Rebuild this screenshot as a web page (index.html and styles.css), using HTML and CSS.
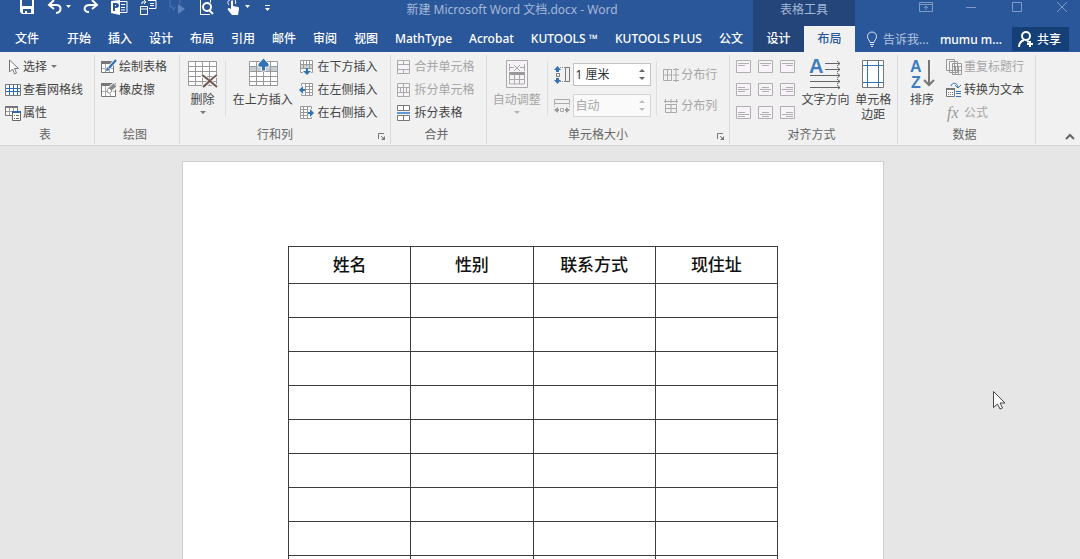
FILE: index.html
```html
<!DOCTYPE html>
<html lang="zh-CN">
<head>
    <meta charset="UTF-8">
    <title>新建 Microsoft Word 文档.docx - Word</title>
    <link rel="stylesheet" href="styles.css">
</head>
<body>
    <header class="header">
        <div class="title-bar">
            <div class="quick-access">
                <button aria-label="保存"><svg width="16" height="16" viewBox="0 0 16 16"><path fill="#fff" fill-rule="evenodd" d="M1 0h14v14H3l-2-2zM3 0v6h10V0zM4 9v4h2v-2h2v2h4V9z"/></svg></button>
                <span class="split">
                    <button aria-label="撤销"><svg width="16" height="16" viewBox="0 0 16 16" fill="none" stroke="#fff" stroke-width="2"><path d="M7 0L2 5l5 4M2 5h7c6 0 6 7 0 8"/></svg></button>
                    <button aria-label="撤销列表"><svg width="5" height="16" viewBox="0 0 5 16"><path fill="#fff" d="M0 5h5L2.500 8z"/></svg></button>
                </span>
                <button aria-label="恢复"><svg width="16" height="16" viewBox="0 0 16 16" fill="none" stroke="#fff" stroke-width="2"><path d="M9 0l5 5-5 4M14 5H7C0 5 0 12 6 12"/></svg></button>
                <button aria-label="发布"><svg width="17" height="16" viewBox="0 0 17 16"><path fill="#fff" fill-rule="evenodd" d="M0 1l9-1v15l-9-2zM2 3v8h2V8h1c4 0 4-5 0-5zM4 5h1v1H4z"/><path fill="none" stroke="#fff" d="M9 1.500h7v11H9M10 4.500h4M10 7.500h4M10 10h4"/></svg></button>
                <button aria-label="合并文档"><svg width="17" height="16" viewBox="0 0 17 16" fill="none" stroke="#fff"><path d="M.5 6.500h7v8h-7zM1 9h6M8 .5h8v8H9M10 3.500h4M10 5.500h4M2 4V2h4M4 0l2 2-2 2"/></svg></button>
                <button aria-label="下一条批注" disabled><svg width="17" height="16" viewBox="0 0 17 16"><path fill="none" stroke="#4f77b3" d="M1 0v7h3v3l3-3M11 0v4"/><path fill="#5f84bb" d="M9 4l7 5-7 5z"/></svg></button>
                <button aria-label="打印预览"><svg width="16" height="16" viewBox="0 0 16 16" fill="none" stroke="#fff"><path d="M12.500 2.500V0M12 14.500H2.500V0"/><circle cx="9" cy="7" r="4" stroke-width="2"/><path stroke-width="2" d="M11 10l4 4"/></svg></button>
                <span class="split">
                    <button aria-label="触摸模式"><svg width="16" height="16" viewBox="0 0 16 16"><path fill="#fff" d="M5 1c1-1 2-1 2 0v5l5 1c1 0 1 1 1 2l-1 6H6L2 10c-1-1 0-2 1-2l2 1z"/><path fill="none" stroke="#fff" d="M3 5C1 3 2 0 4 0M9 4c1-1 1-3 0-4"/></svg></button>
                    <button aria-label="触摸模式列表"><svg width="5" height="16" viewBox="0 0 5 16"><path fill="#fff" d="M0 5h5L2.500 8z"/></svg></button>
                </span>
                <button class="customize" aria-label="自定义"><svg width="7" height="16" viewBox="0 0 7 16"><path fill="#fff" d="M1 5h5v1H1zM1 8h5l-2.500 3z"/></svg></button>
            </div>
            <div class="doc-title">新建 Microsoft Word 文档.docx - Word</div>
        </div>
        <div class="context-title">表格工具</div>
        <div class="window-controls">
            <button aria-label="功能区显示选项"><svg width="14" height="14" viewBox="0 0 14 14"><path d="M.5 2.500h13v9H.5zM1 4.500h12M7 10V6M5 8l2-2 2 2"/></svg></button>
            <button aria-label="最小化"><svg width="14" height="14" viewBox="0 0 14 14"><path d="M2 7.500h10"/></svg></button>
            <button aria-label="最大化"><svg width="14" height="14" viewBox="0 0 14 14"><path d="M2.500 2.500h9v9h-9z"/></svg></button>
            <button aria-label="关闭"><svg width="14" height="14" viewBox="0 0 14 14"><path d="M2 2l10 10M12 2L2 12"/></svg></button>
        </div>
        <nav class="tabs">
            <button>文件</button>
            <div class="tab-list">
                <button>开始</button>
                <button>插入</button>
                <button>设计</button>
                <button>布局</button>
                <button>引用</button>
                <button>邮件</button>
                <button>审阅</button>
                <button>视图</button>
                <button>MathType</button>
                <button>Acrobat</button>
                <button>KUTOOLS ™</button>
                <button>KUTOOLS PLUS</button>
                <button>公文</button>
            </div>
        </nav>
        <nav class="context-tabs">
            <button>设计</button>
            <button class="active">布局</button>
        </nav>
        <div class="account">
            <label class="tell-me">
                <svg width="12" height="16" viewBox="0 0 12 16" fill="none" stroke="#e0e8f4"><path d="M4 11.500c0-2-2.500-3-2.500-6a4.500 4.500 0 0 1 9 0c0 3-2.500 4-2.500 6zM4 13.500h4M5 15.500h2"/></svg>
                <input type="text" placeholder="告诉我..." aria-label="告诉我">
            </label>
            <button class="user">mumu m...</button>
            <button class="share"><svg width="16" height="18" viewBox="0 0 16 18" fill="none" stroke="#fff" stroke-width="2"><circle cx="8" cy="6" r="4"/><path d="M1 17c0-4 2-6 5-7M9 11l2 1M12 11v6M9 14h6"/></svg>共享</button>
        </div>
    </header>

    <main>
        <section class="ribbon">
            <div class="group">
                <div class="group-body">
                    <div class="stack">
                        <button class="small"><svg width="16" height="16" viewBox="0 0 16 16"><path fill="#fff" stroke="#777" d="M4.500 1v12l3-3 2 5 2-1-2-4.500h4z"/></svg>选择<i class="caret"></i></button>
                        <button class="small"><svg width="16" height="16" viewBox="0 0 16 16"><path fill="#fff" stroke="#777" d="M.5 2.500h15v11H.5z"/><path fill="none" stroke="#2f6db5" d="M4.500 3v10M8.500 3v10M12.500 3v10M1 6.500h14M1 9.500h14"/></svg>查看网格线</button>
                        <button class="small"><svg width="16" height="16" viewBox="0 0 16 16"><path fill="#fff" stroke="#777" d="M.5 1.500h12v9H.5z"/><path fill="#777" d="M0 1h13v2H0z"/><path stroke="#999" d="M4.500 3v7M8.500 3v7M1 6.500h11"/><path fill="#fff" stroke="#666" d="M7.500 6.500h8v9h-8z"/><path fill="#2f6db5" d="M7 6h9v2H7z"/><path stroke="#666" d="M9 10.500h1M11 10.500h3M9 13.500h1M11 13.500h3"/></svg>属性</button>
                    </div>
                </div>
                <div class="group-label">表</div>
            </div>

            <div class="group">
                <div class="group-body">
                    <div class="stack">
                        <button class="small"><svg width="16" height="16" viewBox="0 0 16 16"><path fill="#fff" stroke="#777" d="M.5 2.500h12v11H.5z"/><path fill="#777" d="M0 2h13v3H0z"/><path stroke="#aaa" d="M4.500 5v8M8.500 5v8M1 9.500h11"/><path fill="none" stroke="#f1f1f1" stroke-width="4" d="M6 11l9-10"/><path fill="none" stroke="#2f6db5" stroke-width="2" d="M8 9l7-8"/><path fill="#2f6db5" d="M5 12l1-4 3 3z"/></svg>绘制表格</button>
                        <button class="small"><svg width="16" height="16" viewBox="0 0 16 16"><path fill="#fff" stroke="#777" d="M.5 1.500h14v13H.5z"/><path fill="#777" d="M0 1h13v3H0z"/><path stroke="#aaa" d="M4.500 4v10M9.500 4v10M1 9.500h13"/><path stroke="#f1f1f1" stroke-width="7" d="M7 9l8-6"/><path stroke="#888" stroke-width="4" d="M8 8l6-5"/><path fill="#fff" stroke="#999" d="M6 8l2-2 3 3-2 2H7z"/></svg>橡皮擦</button>
                    </div>
                </div>
                <div class="group-label">绘图</div>
            </div>

            <div class="group">
                <div class="group-body">
                    <button class="large"><svg width="32" height="30" viewBox="0 0 32 30"><path fill="#fff" stroke="#999" d="M1.500 2.500h28v24h-28z"/><path stroke="#999" d="M8.500 2v24M15.500 2v24M22.500 2v24M1 7.500h28M1 12.500h28M1 17.500h28M1 22.500h28"/><path stroke="#f1f1f1" stroke-width="4" d="M15 16l15 12M30 16L16 28"/><path fill="none" stroke="#6b5650" stroke-width="2" d="M15 16c5 3 10 8 15 12M30 16c-5 3-9 8-14 12"/></svg>删除<i class="caret"></i></button>
                    <div class="divider"></div>
                    <button class="large"><svg width="32" height="30" viewBox="0 0 32 30"><path fill="#fff" stroke="#999" d="M2.500 2.500h28v24h-28z"/><path fill="#c5ccd6" d="M3 8h27v5H3z"/><path stroke="#999" d="M9.500 2v24M16.500 13v13M23.500 2v24M2 7.500h28M2 12.500h28M2 17.500h28M2 22.500h28"/><path fill="#2f75b5" stroke="#f1f1f1" d="M16.500-1L22 5v3h-3.500v4h-4V8H11V5z"/></svg>在上方插入</button>
                    <div class="stack">
                        <button class="small"><svg width="16" height="16" viewBox="0 0 16 16"><path fill="#fff" stroke="#999" d="M1.500 1.500h12v12h-12z"/><path fill="#ccd2da" d="M2 6h11v3H2z"/><path stroke="#999" d="M4.500 1v12M7.500 1v6M10.500 1v12M1 5.500h12M1 9.500h12"/><path fill="#f1f1f1" d="M4 10h8v6H4z"/><path fill="#2f75b5" d="M7 9h2v3h3l-4 4-4-4h3z"/></svg>在下方插入</button>
                        <button class="small"><svg width="16" height="16" viewBox="0 0 16 16"><path fill="#fff" stroke="#999" d="M2.500 1.500h11v12h-11z"/><path stroke="#999" d="M6.500 1v12M10.500 1v12M2 4.500h11M2 7.500h11M2 10.500h11"/><path fill="#f1f1f1" d="M0 4h6v8H0z"/><path fill="#2f75b5" d="M0 8l4-4v3h2v2H4v3z"/></svg>在左侧插入</button>
                        <button class="small"><svg width="16" height="16" viewBox="0 0 16 16"><path fill="#fff" stroke="#999" d="M1.500 1.500h11v12h-11z"/><path stroke="#999" d="M4.500 1v12M8.500 1v12M1 4.500h11M1 7.500h11M1 10.500h11"/><path fill="#f1f1f1" d="M9 4h6v8H9z"/><path fill="#2f75b5" d="M15 8l-4-4v3H9v2h2v3z"/></svg>在右侧插入</button>
                    </div>
                </div>
                <div class="group-label wide">行和列</div>
                <button class="launcher" aria-label="插入单元格"><svg width="8" height="8" viewBox="0 0 8 8"><path fill="none" stroke="#777" d="M.5 6V.5H6M3 3l3 3"/><path fill="#777" d="M7 3v4H3z"/></svg></button>
            </div>

            <div class="group">
                <div class="group-body">
                    <div class="stack">
                        <button class="small" disabled><svg width="16" height="16" viewBox="0 0 16 16" fill="#f7f2f7" stroke="#aaa"><path d="M1.500 1.500h12v13h-12zM1 5.500h12M1 10.500h12M7.500 1v4M7.500 11v4"/></svg>合并单元格</button>
                        <button class="small" disabled><svg width="16" height="16" viewBox="0 0 16 16" fill="#f7f2f7" stroke="#aaa"><path d="M1.500 1.500h12v13h-12zM1 5.500h12M1 10.500h12M7.500 1v14M4.500 6v4M10.500 6v4"/></svg>拆分单元格</button>
                        <button class="small"><svg width="16" height="16" viewBox="0 0 16 16"><path fill="#fff" stroke="#777" d="M1.500.5h12v5h-12zM1.500 10.500h12v5h-12zM7.500 1v4M7.500 11v4"/><path stroke="#5b9bd5" stroke-width="2" d="M1 8h13"/></svg>拆分表格</button>
                    </div>
                </div>
                <div class="group-label">合并</div>
            </div>

            <div class="group">
                <div class="group-body">
                    <button class="large" disabled><svg width="24" height="30" viewBox="0 0 24 30"><path fill="#f7f2f7" stroke="#aaa" d="M1.500 1.500h21v27h-21z"/><path fill="#999" d="M4 13h16v3H4z"/><path fill="none" stroke="#aaa" d="M4.500 14v11h15V14M4 20.500h16M9.500 16v9M14.500 16v9M4.500 5v7M19.500 5v7M5 8.500h4M15 8.500h4M9 6l6 6M15 6l-6 6"/></svg>自动调整<i class="caret"></i></button>
                    <div class="divider"></div>
                    <div class="sizes">
                        <div class="size-row">
                            <svg width="16" height="18" viewBox="0 0 16 18"><path fill="#2f75b5" d="M3.500 0L7 4H5v2H2V4H0zM3.500 18L7 14H5v-2H2v2H0z"/><path fill="none" stroke="#777" d="M2.500 7.500h3v3h-3zM11.500 1.500h4v14h-4z"/><path stroke="#888" stroke-dasharray="1 1" d="M6 1.500h5M6 15.500h5"/></svg>
                            <div class="spin">
                                <input type="text" value="1 厘米" aria-label="高度">
                                <div class="arrows"><button aria-label="增加高度" class="up"></button><button aria-label="减少高度" class="down"></button></div>
                            </div>
                        </div>
                        <div class="size-row">
                            <svg width="16" height="18" viewBox="0 0 16 18"><path fill="none" stroke="#aaa" d="M.5 2.500h15v4H.5zM6.500 11.500h3v3h-3z"/><path stroke="#aaa" stroke-dasharray="1 1" d="M.5 7v3M15.500 7v3"/><path fill="#999" d="M0 13l4-3v2h1v2H4v2zM16 13l-4-3v2h-1v2h1v2z"/></svg>
                            <div class="spin off">
                                <input type="text" value="自动" aria-label="宽度" disabled>
                                <div class="arrows"><button aria-label="增加宽度" class="up" disabled></button><button aria-label="减少宽度" class="down" disabled></button></div>
                            </div>
                        </div>
                    </div>
                    <div class="divider"></div>
                    <div class="sizes">
                        <button class="small" disabled><svg width="16" height="16" viewBox="0 0 16 16" fill="none" stroke="#aaa"><path d="M.5 2.500h8v11h-8zM0 8h9M4.500 3v10M10 2.500h6M10 8h6M10 13.500h6M13 1v14"/></svg>分布行</button>
                        <button class="small" disabled><svg width="16" height="16" viewBox="0 0 16 16" fill="none" stroke="#aaa"><path d="M2.500 6.500h11v8h-11zM2 10.500h12M8 6v9M1 3.500h14M2.500 1v4M8 1v4M13.500 1v4"/></svg>分布列</button>
                    </div>
                </div>
                <div class="group-label wide">单元格大小</div>
                <button class="launcher" aria-label="表格属性"><svg width="8" height="8" viewBox="0 0 8 8"><path fill="none" stroke="#777" d="M.5 6V.5H6M3 3l3 3"/><path fill="#777" d="M7 3v4H3z"/></svg></button>
            </div>

            <div class="group">
                <div class="group-body even">
                    <div class="align-grid">
                        <button disabled aria-label="靠上左对齐"><svg width="16" height="14" viewBox="0 0 16 14"><path d="M.5.5h14v12H.5zM2 3.500h11M2 5.500h7"/></svg></button>
                        <button disabled aria-label="靠上居中"><svg width="16" height="14" viewBox="0 0 16 14"><path d="M.5.5h14v12H.5zM2 3.500h11M4 5.500h7"/></svg></button>
                        <button disabled aria-label="靠上右对齐"><svg width="16" height="14" viewBox="0 0 16 14"><path d="M.5.5h14v12H.5zM2 3.500h11M6 5.500h7"/></svg></button>
                        <button disabled aria-label="中部左对齐"><svg width="16" height="14" viewBox="0 0 16 14"><path d="M.5.5h14v12H.5zM2 4.500h7M2 6.500h11M2 8.500h7"/></svg></button>
                        <button disabled aria-label="水平居中"><svg width="16" height="14" viewBox="0 0 16 14"><path d="M.5.5h14v12H.5zM4 4.500h7M2 6.500h11M4 8.500h7"/></svg></button>
                        <button disabled aria-label="中部右对齐"><svg width="16" height="14" viewBox="0 0 16 14"><path d="M.5.5h14v12H.5zM6 4.500h7M2 6.500h11M6 8.500h7"/></svg></button>
                        <button disabled aria-label="靠下左对齐"><svg width="16" height="14" viewBox="0 0 16 14"><path d="M.5.5h14v12H.5zM2 6.500h7M2 8.500h11M2 10.500h7"/></svg></button>
                        <button disabled aria-label="靠下居中"><svg width="16" height="14" viewBox="0 0 16 14"><path d="M.5.5h14v12H.5zM4 6.500h7M2 8.500h11M4 10.500h7"/></svg></button>
                        <button disabled aria-label="靠下右对齐"><svg width="16" height="14" viewBox="0 0 16 14"><path d="M.5.5h14v12H.5zM6 6.500h7M2 8.500h11M6 10.500h7"/></svg></button>
                    </div>
                    <button class="large"><svg width="32" height="30" viewBox="0 0 32 30"><text x="0" y="14" class="glyph">A</text><path fill="none" stroke="#666" d="M16 4.500h15M16 10.500h15M1 16.500h30M1 22.500h30M1 28.500h30M28 2l3 2.500L28 7M28 8l3 2.500-3 2.500M28 14l3 2.500-3 2.500M28 20l3 2.500-3 2.500M28 26l3 2.500-2 1.500"/></svg>文字方向</button>
                    <button class="large"><svg width="24" height="30" viewBox="0 0 24 30"><path fill="#fff" stroke="#777" d="M1.500 1.500h21v27h-21z"/><path stroke="#2f75b5" d="M6.500 2v26M17.500 2v26M2 6.500h20M2 23.500h20"/></svg>单元格<br>边距</button>
                </div>
                <div class="group-label">对齐方式</div>
            </div>

            <div class="group">
                <div class="group-body even">
                    <button class="large"><svg width="26" height="30" viewBox="0 0 26 30"><text x="1" y="13" class="glyph letter">A</text><text x="2" y="29" class="glyph letter">Z</text><path fill="none" stroke="#777" stroke-width="2" d="M20 1v25M15 21l5 5 5-5"/></svg>排序</button>
                    <div class="stack">
                        <button class="small" disabled><svg width="16" height="16" viewBox="0 0 16 16" fill="#f4f4f4" stroke="#999"><path d="M.5.5h8v11h-8zM3.500 2.500h8v11h-8zM6.500 4.500h9v11h-9zM6 7.500h9M9.500 8v7M12.500 8v7M7 11.500h8"/></svg>重复标题行</button>
                        <button class="small"><svg width="16" height="16" viewBox="0 0 16 16"><path fill="#fff" stroke="#777" d="M.5 6.500h8v8h-8z"/><path fill="#777" d="M0 6h9v2H0z"/><path stroke="#777" stroke-dasharray="1 1" d="M2 10.500h5M2 12.500h5"/><path fill="none" stroke="#2f75b5" d="M5 4c1-4 7-4 7 2M9 3l3 3 3-3"/><path stroke="#2f75b5" d="M10 9.500h5M10 11.500h5M10 14.500h5"/></svg>转换为文本</button>
                        <button class="small" disabled><svg width="16" height="16" viewBox="0 0 16 16"><text x="1" y="13" class="fx">fx</text></svg>公式</button>
                    </div>
                </div>
                <div class="group-label">数据</div>
            </div>

            <div class="collapse">
                <button aria-label="折叠功能区"><svg width="10" height="8" viewBox="0 0 10 8"><path fill="none" stroke="#666" stroke-width="2" d="M1 6l4-4 4 4"/></svg></button>
            </div>
        </section>

        <section class="workspace">
            <article class="page">
                <table>
                    <thead>
                        <tr><th>姓名</th><th>性别</th><th>联系方式</th><th>现住址</th></tr>
                    </thead>
                    <tbody>
                        <tr><td></td><td></td><td></td><td></td></tr>
                        <tr><td></td><td></td><td></td><td></td></tr>
                        <tr><td></td><td></td><td></td><td></td></tr>
                        <tr><td></td><td></td><td></td><td></td></tr>
                        <tr><td></td><td></td><td></td><td></td></tr>
                        <tr><td></td><td></td><td></td><td></td></tr>
                        <tr><td></td><td></td><td></td><td></td></tr>
                        <tr><td></td><td></td><td></td><td></td></tr>
                        <tr><td></td><td></td><td></td><td></td></tr>
                    </tbody>
                </table>
            </article>
            <svg class="pointer" width="14" height="20" viewBox="0 0 14 20"><path fill="#fff" stroke="#444" d="M1.500 1.500v16l4-3.500 2.500 5 2.500-1-2.500-5h5z"/></svg>
        </section>
    </main>
</body>
</html>
```
FILE: styles.css
```css
* {
    box-sizing: border-box;
}

body {
    display: flex;
    flex-direction: column;
    height: 100vh;
    margin: 0;
    overflow: hidden;
    font-family: "Noto Sans", "Noto Sans CJK SC", sans-serif;
    font-size: 12px;
    line-height: 15px;
    color: #444;
    background-color: #e6e6e6;
}

button {
    padding: 0;
    border: none;
    background: none;
    font: inherit;
    color: inherit;
    white-space: nowrap;
}

button:disabled {
    color: #a6a6a6;
}

svg {
    display: block;
    flex-shrink: 0;
    overflow: visible;
}

/* title bar and tabs */
.header {
    display: grid;
    grid-template-columns: 1fr 102px 225px;
    grid-template-rows: 26px 26px;
    background-color: #2a579a;
    color: #fff;
}

.title-bar {
    display: flex;
}

.quick-access {
    display: flex;
    align-items: flex-start;
    gap: 12px;
    padding-left: 19px;
}

.split {
    display: flex;
    gap: 3px;
}

.customize {
    padding-left: 2px;
}

.doc-title {
    flex: 1;
    padding-top: 2px;
    text-align: center;
    color: #a5b8d7;
}

.context-title {
    padding-top: 2px;
    text-align: center;
    background-color: #24457a;
    color: #a5b8d7;
}

.window-controls {
    display: flex;
    justify-content: space-between;
    align-items: flex-start;
    padding: 0 11px 0 64px;
}

.window-controls path {
    fill: none;
    stroke: #7f9bc6;
}

.tabs {
    display: flex;
    gap: 28px;
    padding: 0 10px 2px 15px;
    font-weight: 500;
}

.tab-list {
    display: flex;
    flex: 1;
    justify-content: space-between;
}

.context-tabs {
    display: grid;
    grid-template-columns: 1fr 1fr;
    background-color: #24457a;
    font-weight: 500;
}

.context-tabs button {
    padding-bottom: 2px;
}

.context-tabs .active {
    background-color: #f1f1f1;
    color: #2a579a;
}

.account {
    display: flex;
    align-items: center;
    padding: 0 11px 0 11px;
}

.tell-me {
    display: flex;
    flex: 1;
    align-items: center;
    gap: 5px;
}

.tell-me input {
    width: 50px;
    padding: 0;
    border: none;
    background: none;
    font: inherit;
    color: #fff;
}

.tell-me input::placeholder {
    color: #b4c4de;
}

.user {
    padding-right: 10px;
    font-weight: 500;
}

.share {
    display: flex;
    align-items: center;
    gap: 3px;
    height: 24px;
    padding: 0 8px 0 6px;
    background-color: #153f77;
    font-weight: 500;
}

/* ribbon */
.ribbon {
    display: grid;
    grid-template-columns: 95fr 85fr 211fr 96fr 243fr 168fr 138fr 44fr;
    padding: 3px 0 1px;
    border-bottom: 1px solid #d2d2d2;
    background-color: #f1f1f1;
}

.group {
    position: relative;
    min-width: 0;
    border-right: 1px solid #dadada;
}

.group-body {
    display: flex;
    justify-content: space-evenly;
    height: 69px;
    padding-right: 6px;
}

.group-body.even {
    padding-right: 0;
}

.group-label {
    height: 20px;
    padding-right: 4px;
    line-height: 22px;
    text-align: center;
    color: #666;
}

.group-label.wide {
    padding-right: 20px;
}

.launcher {
    position: absolute;
    right: 4px;
    bottom: 3px;
}

.stack {
    display: grid;
    grid-template-rows: 23px 23px 23px;
}

.small {
    display: flex;
    align-items: center;
    gap: 2px;
}

.large {
    display: flex;
    flex-direction: column;
    align-items: center;
    padding-top: 4px;
}

.large svg {
    margin-bottom: 3px;
}

.caret {
    margin: 4px 2px;
    border: 3px solid transparent;
    border-top-color: #777;
    border-bottom: none;
}

button:disabled .caret {
    border-top-color: #b5b5b5;
}

.divider {
    width: 1px;
    margin: 6px 0 8px;
    background-color: #dedede;
}

.sizes {
    display: grid;
    grid-template-rows: 23px 23px;
    align-content: start;
    gap: 8px;
    padding-top: 8px;
}

.size-row {
    display: flex;
    align-items: center;
    gap: 3px;
}

.spin {
    display: flex;
    width: 78px;
    height: 23px;
    border: 1px solid #c3c3c3;
    background-color: #fff;
}

.spin input {
    flex: 1;
    min-width: 0;
    padding: 0 2px;
    border: none;
    background: none;
    font: inherit;
    color: #333;
}

.spin.off {
    border-color: #d4d4d4;
    background-color: #fafafa;
}

.spin.off input {
    color: #a6a6a6;
}

.arrows {
    display: flex;
    flex-direction: column;
    justify-content: space-evenly;
    padding-right: 5px;
}

.up,
.down {
    border: 3px solid transparent;
}

.up {
    border-top: none;
    border-bottom-color: #666;
}

.down {
    border-bottom: none;
    border-top-color: #666;
}

.up:disabled {
    border-bottom-color: #bbb;
}

.down:disabled {
    border-top-color: #bbb;
}

.align-grid {
    display: grid;
    grid-template-columns: 16px 16px 16px;
    grid-template-rows: 23px 23px 23px;
    column-gap: 6px;
}

.align-grid path {
    fill: #f8f3f9;
    stroke: #b0b0b0;
}

.glyph {
    font-family: "Liberation Sans", sans-serif;
    font-size: 20px;
    font-weight: 700;
    fill: #3d7dbf;
}

.letter {
    font-size: 16px;
}

.fx {
    font-family: "Liberation Serif", serif;
    font-size: 16px;
    font-style: italic;
    fill: #999;
}

.collapse {
    display: flex;
    align-items: flex-end;
    justify-content: flex-end;
    padding: 0 5px 3px 0;
}

/* document */
main {
    display: flex;
    flex: 1;
    flex-direction: column;
    min-height: 0;
}

.workspace {
    display: flex;
    flex: 1;
    justify-content: center;
    min-height: 0;
    padding: 15px 14px 0 0;
    overflow: hidden;
    position: relative;
}

.page {
    width: 65%;
    min-width: 702px;
    padding: 84px 105px 0;
    border: 1px solid #cfcfcf;
    border-bottom: none;
    background-color: #fff;
}

table {
    width: 100%;
    table-layout: fixed;
    border-collapse: collapse;
}

th,
td {
    height: 34px;
    padding: 0;
    border: 1px solid #3c3c3c;
}

th {
    height: 37px;
    font-size: 17px;
    font-weight: 500;
    line-height: 24px;
    color: #111;
}

.pointer {
    position: absolute;
    top: 244px;
    left: 992px;
}
```
